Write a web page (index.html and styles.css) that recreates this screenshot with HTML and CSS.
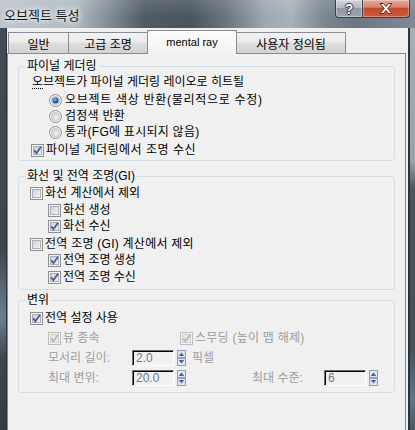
FILE: index.html
```html
<!DOCTYPE html>
<html lang="ko">
<head>
<meta charset="utf-8">
<title>오브젝트 특성</title>
<link rel="stylesheet" href="styles.css">
</head>
<body>
<svg class="defs" width="0" height="0" aria-hidden="true">
  <defs>
    <linearGradient id="cbg" x1="0" y1="0" x2="1" y2="1">
      <stop offset="0" stop-color="#cbcfd5"/>
      <stop offset="1" stop-color="#f6f6f6"/>
    </linearGradient>
    <linearGradient id="rbg" x1="0" y1="0" x2="1" y2="1">
      <stop offset="0" stop-color="#c9cdd2"/>
      <stop offset="1" stop-color="#fbfbfb"/>
    </linearGradient>
    <radialGradient id="dot" cx="0.4" cy="0.35" r="0.7">
      <stop offset="0" stop-color="#8fc2f5"/>
      <stop offset="0.5" stop-color="#2a6bc2"/>
      <stop offset="1" stop-color="#123f82"/>
    </radialGradient>
    <symbol id="cb" viewBox="0 0 13 13">
      <rect x="0.5" y="0.5" width="12" height="12" fill="#f4f4f4" stroke="#8e8f8f"/>
      <rect x="2.5" y="2.5" width="8" height="8" fill="url(#cbg)" stroke="#aab0b8"/>
    </symbol>
    <symbol id="cb-on" viewBox="0 0 13 13">
      <rect x="0.5" y="0.5" width="12" height="12" fill="#f4f4f4" stroke="#8e8f8f"/>
      <rect x="2.5" y="2.5" width="8" height="8" fill="url(#cbg)" stroke="#aab0b8"/>
      <path d="M3.2 6.3 L5.4 9.2 L10 2.8" fill="none" stroke="#4a5d96" stroke-width="1.9"/>
    </symbol>
    <symbol id="cb-dis" viewBox="0 0 13 13">
      <rect x="0.5" y="0.5" width="12" height="12" fill="#f4f4f4" stroke="#bcbcbc"/>
      <rect x="2.5" y="2.5" width="8" height="8" fill="#e9e9e9" stroke="#d0d0d0"/>
      <path d="M3.2 6.3 L5.4 9.2 L10 2.8" fill="none" stroke="#b8b8b8" stroke-width="1.9"/>
    </symbol>
    <symbol id="rb" viewBox="0 0 13 13">
      <circle cx="6.5" cy="6.5" r="6" fill="#f4f4f4" stroke="#8e8f8f"/>
      <circle cx="6.5" cy="6.5" r="4" fill="url(#rbg)" stroke="#b8bcc2"/>
    </symbol>
    <symbol id="rb-on" viewBox="0 0 13 13">
      <circle cx="6.5" cy="6.5" r="6" fill="#f4f4f4" stroke="#8e8f8f"/>
      <circle cx="6.5" cy="6.5" r="4" fill="url(#rbg)" stroke="#b8bcc2"/>
      <circle cx="6.5" cy="6.5" r="3" fill="url(#dot)"/>
    </symbol>
    <symbol id="spin" viewBox="0 0 9 16">
      <rect x="0.5" y="0.5" width="8" height="7" fill="#dfe6f1" stroke="#8d9dbd"/>
      <rect x="0.5" y="8.5" width="8" height="7" fill="#dfe6f1" stroke="#8d9dbd"/>
      <path d="M1.8 6 L4.5 2.4 L7.2 6z" fill="#4b5e93"/>
      <path d="M1.8 10 L4.5 13.6 L7.2 10z" fill="#4b5e93"/>
    </symbol>
  </defs>
</svg>

<div class="window">
  <header class="titlebar">
    <span class="title">오브젝트 특성</span>
    <div class="caption-btns">
      <div class="cbtn help"><span>?</span></div>
      <div class="cbtn close">
        <svg width="14" height="11" viewBox="0 0 14 11"><path d="M1 0.5h3.4l2.6 3 2.6-3h3.4l-4.2 5 4.2 5h-3.4l-2.6-3-2.6 3h-3.4l4.2-5z" fill="#fff" stroke="#6a2414" stroke-width="1"/></svg>
      </div>
    </div>
  </header>

  <div class="frame-row">
    <div class="frame-left"></div>
    <main class="client">
      <nav class="tabs">
        <div class="tab t1">일반</div>
        <div class="tab t2">고급 조명</div>
        <div class="tab t3 active">mental ray</div>
        <div class="tab t4">사용자 정의됨</div>
      </nav>

      <section class="panel">
        <fieldset class="group g1">
          <legend>파이널 게더링</legend>
          <div class="row desc"><span class="mn">오</span>브젝트가 파이널 게더링 레이오로 히트될</div>
          <div class="row radio-row first"><svg class="ctl"><use href="#rb-on"/></svg><span class="wide">오브젝트 색상 반환(물리적으로 수정)</span></div>
          <div class="row radio-row"><svg class="ctl"><use href="#rb"/></svg><span class="wide-s">검정색 반환</span></div>
          <div class="row radio-row"><svg class="ctl"><use href="#rb"/></svg><span class="wide-s">통과(FG에 표시되지 않음)</span></div>
          <div class="row cb-row fg-cb"><svg class="ctl"><use href="#cb-on"/></svg><span class="wide-m">파이널 게더링에서 조명 수신</span></div>
        </fieldset>

        <fieldset class="group g2">
          <legend>화선 및 전역 조명(GI)</legend>
          <div class="row cb-row m1"><svg class="ctl"><use href="#cb"/></svg><span>화선 계산에서 제외</span></div>
          <div class="row cb-row sub m1"><svg class="ctl"><use href="#cb"/></svg><span>화선 생성</span></div>
          <div class="row cb-row sub"><svg class="ctl"><use href="#cb-on"/></svg><span>화선 수신</span></div>
          <div class="row cb-row m2"><svg class="ctl"><use href="#cb"/></svg><span class="wide-s">전역 조명 (GI) 계산에서 제외</span></div>
          <div class="row cb-row sub"><svg class="ctl"><use href="#cb-on"/></svg><span>전역 조명 생성</span></div>
          <div class="row cb-row sub m1"><svg class="ctl"><use href="#cb-on"/></svg><span>전역 조명 수신</span></div>
        </fieldset>

        <fieldset class="group g3">
          <legend>변위</legend>
          <div class="row cb-row m2"><svg class="ctl"><use href="#cb-on"/></svg><span>전역 설정 사용</span></div>
          <div class="row sub dis ra">
            <div class="cell-a cb-row"><svg class="ctl"><use href="#cb-dis"/></svg><span>뷰 종속</span></div>
            <div class="cb-row"><svg class="ctl"><use href="#cb-dis"/></svg><span class="wide-s">스무딩 (높이 맵 해제)</span></div>
          </div>
          <div class="row sub dis field-row rb">
            <span class="lbl">모서리 길이:</span>
            <span class="input">2.0</span>
            <svg class="spin"><use href="#spin"/></svg>
            <span class="unit">픽셀</span>
          </div>
          <div class="row sub dis field-row rc">
            <span class="lbl">최대 변위:</span>
            <span class="input">20.0</span>
            <svg class="spin"><use href="#spin"/></svg>
            <span class="lbl2">최대 수준:</span>
            <span class="input">6</span>
            <svg class="spin"><use href="#spin"/></svg>
          </div>
        </fieldset>
      </section>
    </main>
    <div class="frame-right"></div>
  </div>
</div>
</body>
</html>
```

FILE: styles.css
```css
* { box-sizing: border-box; }
html, body { margin: 0; padding: 0; }
body {
  width: 415px;
  height: 430px;
  overflow: hidden;
  font-family: "Liberation Sans", "Noto Sans CJK KR", sans-serif;
  font-size: 12px;
  color: #000;
  background: #59636d;
}
.defs { position: absolute; width: 0; height: 0; overflow: hidden; }

.window { display: flex; flex-direction: column; height: 430px; }

/* title bar */
.titlebar {
  height: 28px;
  flex: none;
  display: flex;
  justify-content: space-between;
  align-items: flex-start;
  background:
    linear-gradient(rgba(255,255,255,0.12), rgba(255,255,255,0) 60%),
    linear-gradient(90deg, #bcc4cb 0, #b0b9c1 18%, #7d8893 27%, #4f5a64 35%, #4a555f 46%, #6c7782 55%, #9ea8b1 64%, #a9b2ba 70%, #7c8791 78%, #6b7680 86%, #7f8a94 100%);
}
.title {
  font-family: "Noto Sans CJK KR", sans-serif;
  font-size: 13px;
  line-height: 16px;
  padding: 7px 0 0 4px;
  color: #151515;
  text-shadow: 0 0 4px #fff, 0 0 8px rgba(255,255,255,0.9), 0 0 10px rgba(255,255,255,0.6);
}
.caption-btns { display: flex; margin-right: 5px; }
.cbtn {
  height: 18px;
  display: flex;
  align-items: center;
  justify-content: center;
  border: 1px solid #36404a;
  border-top: none;
}
.help {
  width: 28px;
  border-radius: 0 0 0 4px;
  background: linear-gradient(#cfd5db, #b1bac2 45%, #8e99a4 50%, #9ba5af);
  box-shadow: inset 0 0 0 1px rgba(255,255,255,0.35);
}
.help span {
  font: bold 14px/1 "Liberation Sans", sans-serif;
  color: #fff;
  text-shadow: 1px 0 0 #333, -1px 0 0 #333, 0 1px 0 #333, 0 -1px 0 #333;
}
.close {
  width: 48px;
  margin-left: -1px;
  border-radius: 0 0 4px 0;
  background: linear-gradient(#e8ab9c, #d6806b 42%, #c24a2f 50%, #cd5c3f);
  box-shadow: inset 0 0 0 1px rgba(255,255,255,0.3);
}

/* window frame */
.frame-row { flex: 1; display: flex; min-height: 0; }
.frame-left {
  width: 7px;
  flex: none;
  background: linear-gradient(#414c56, #3b4650 55%, #6d7f8c 72%, #3c4751 82%, #333d46);
  border-right: 1px solid #28313a;
}
.frame-right {
  flex: 1;
  background: linear-gradient(#a5adb5, #99a2ab 33%, #4b5661 40%, #46515c 80%, #5d7a86 92%, #4a5661);
  border-left: 2px solid #2b343c;
}
.client {
  width: 401px;
  flex: none;
  background: #f0f0f0;
  display: flex;
  flex-direction: column;
}

/* tabs */
.tabs {
  height: 26px;
  flex: none;
  display: flex;
  align-items: flex-start;
  padding-left: 1px;
}
.tab {
  margin-top: 4px;
  height: 21px;
  display: flex;
  align-items: center;
  justify-content: center;
  border: 1px solid #898c95;
  border-bottom: none;
  background: linear-gradient(#f3f3f3, #ebebeb 45%, #dedede 50%, #d2d2d2);
  font-size: 12px;
  padding-top: 1px;
}
.t1 { width: 61px; }
.t2 { width: 80px; margin-left: -1px; }
.t3 { width: 90px; margin-left: -1px; }
.t4 { width: 110px; margin-left: -1px; }
.tab.active {
  margin-top: 2px;
  height: 24px;
  z-index: 1;
  background: linear-gradient(#fcfcfc, #f3f3f3);
  font-size: 11px;
  padding-top: 0;
  padding-bottom: 1px;
}

/* panel and group boxes */
.panel {
  flex: 1;
  margin-top: -1px;
  margin-right: 2px;
  border: 1px solid #898c95;
  border-bottom: none;
  padding: 4px 10px 0 10px;
  background: #f0f0f0;
}

.group {
  margin: 0;
  border: 1px solid #d3dde4;
  border-radius: 3px;
  padding: 0 0 0 6px;
  min-width: 0;
}
.group legend { padding: 0 2px; line-height: 16px; height: 16px; }
.g1 { padding-bottom: 2px; }
.g2 { margin-top: 7px; padding-bottom: 4px; }
.g3 { margin-top: 2px; padding-bottom: 6px; }

.row {
  display: flex;
  align-items: center;
  height: 16px;
  line-height: 16px;
  white-space: nowrap;
  padding-left: 5px;
}
.ctl { width: 13px; height: 13px; flex: none; }
.cb-row { display: flex; align-items: center; gap: 2px; }
.radio-row { gap: 3px; padding-left: 24px; }
.radio-row.first { margin-top: 2px; }
.desc { padding-left: 7px; }
.mn { border-bottom: 1px dotted #000; line-height: 12px; display: inline-block; }
.fg-cb { margin-top: 2px; padding-left: 6px; }
.sub { padding-left: 23px; }
.m1 { margin-top: 1px; }
.m2 { margin-top: 2px; }

.wide { letter-spacing: 0.7px; }
.wide-m { letter-spacing: 0.5px; }
.wide-s { letter-spacing: 0.25px; }

.dis { color: #9d9d9d; }
.ra { margin-top: 4px; }
.cell-a { width: 132px; }

/* numeric fields */
.field-row { height: 16px; }
.rb { margin-top: 4px; }
.rc { margin-top: 4px; }
.lbl { width: 84px; flex: none; }
.input {
  width: 42px;
  height: 16px;
  flex: none;
  border: 1px solid;
  border-color: #6d6d6d #ffffff #ffffff #6d6d6d;
  box-shadow: inset 1px 1px 0 #000;
  background: #f0f0f0;
  color: #6c7a98;
  line-height: 14px;
  padding-left: 3px;
  font-size: 12px;
}
.spin { width: 9px; height: 16px; flex: none; margin-left: 3px; }
.unit { margin-left: 6px; }
.lbl2 { margin-left: 66px; width: 72px; flex: none; }
```
